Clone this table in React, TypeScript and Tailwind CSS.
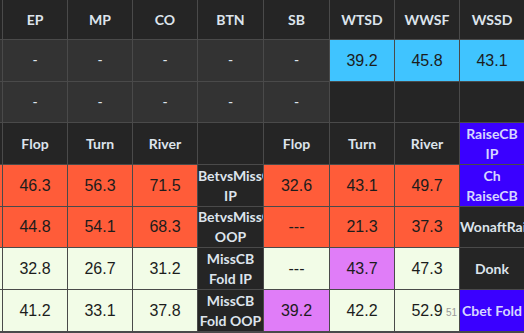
type Kind = "edge" | "head" | "dash" | "empty" | "blue" | "red" | "green" | "purple" | "label" | "violet";

interface CellData {
  kind: Kind;
  text?: string;
  note?: string;
}

const kindClass: Record<Kind, string> = {
  edge: "bg-[#252525]",
  head: "bg-[#252525] text-[#dde4ec] font-['Lato',sans-serif] font-bold text-[14px]",
  dash: "bg-[#333333] text-[#dde4ec] font-['Liberation_Sans',sans-serif] text-[14px]",
  empty: "bg-[#252525]",
  blue: "bg-[#40c4ff] text-[#1c1c1c] font-['Liberation_Sans',sans-serif] text-[16px]",
  red: "bg-[#ff5c39] text-[#1c1c1c] font-['Liberation_Sans',sans-serif] text-[16px]",
  green: "bg-[#f2fce7] text-[#1c1c1c] font-['Liberation_Sans',sans-serif] text-[16px]",
  purple: "bg-[#e07df8] text-[#1c1c1c] font-['Liberation_Sans',sans-serif] text-[16px]",
  label: "bg-[#252525] text-[#dde4ec] font-['Lato',sans-serif] font-bold text-[14px] leading-[20px]",
  violet: "bg-[#3a00ff] text-[#d6d6ff] font-['Lato',sans-serif] font-bold text-[14px] leading-[20px]",
};

const h = (text: string): CellData => ({ kind: "head", text });
const n = (kind: Kind, text: string, note?: string): CellData => ({ kind, text, note });

const rows: CellData[][] = [
  [{ kind: "edge" }, h("EP"), h("MP"), h("CO"), h("BTN"), h("SB"), h("WTSD"), h("WWSF"), h("WSSD")],
  [
    { kind: "dash" },
    n("dash", "-"), n("dash", "-"), n("dash", "-"), n("dash", "-"), n("dash", "-"),
    n("blue", "39.2"), n("blue", "45.8"), n("blue", "43.1"),
  ],
  [
    { kind: "dash" },
    n("dash", "-"), n("dash", "-"), n("dash", "-"), n("dash", "-"), n("dash", "-"),
    { kind: "empty" }, { kind: "empty" }, { kind: "empty" },
  ],
  [
    { kind: "edge" },
    h("Flop"), h("Turn"), h("River"), { kind: "empty" },
    h("Flop"), h("Turn"), h("River"), n("violet", "RaiseCB IP"),
  ],
  [
    { kind: "red" },
    n("red", "46.3"), n("red", "56.3"), n("red", "71.5"), n("label", "BetvsMissCB IP"),
    n("red", "32.6"), n("red", "43.1"), n("red", "49.7"), n("violet", "Ch RaiseCB"),
  ],
  [
    { kind: "red" },
    n("red", "44.8"), n("red", "54.1"), n("red", "68.3"), n("label", "BetvsMissCB OOP"),
    n("red", "---"), n("red", "21.3"), n("red", "37.3"), n("label", "WonaftRaise"),
  ],
  [
    { kind: "green" },
    n("green", "32.8"), n("green", "26.7"), n("green", "31.2"), n("label", "MissCB Fold IP"),
    n("green", "---"), n("purple", "43.7"), n("green", "47.3"), n("label", "Donk"),
  ],
  [
    { kind: "green" },
    n("green", "41.2"), n("green", "33.1"), n("green", "37.8"), n("label", "MissCB Fold OOP"),
    n("purple", "39.2"), n("green", "42.2"), n("green", "52.9", "51"), n("violet", "Cbet Fold"),
  ],
];

function Cell({ cell }: { cell: CellData }) {
  return (
    <div
      className={`relative flex items-center justify-center overflow-hidden text-center ${kindClass[cell.kind]}`}
    >
      <span className="block w-full">{cell.text}</span>
      {cell.note && (
        <span className="absolute right-[2px] bottom-[13px] font-['Liberation_Sans',sans-serif] text-[10px] leading-none text-[#9a9a9a]">
          {cell.note}
        </span>
      )}
    </div>
  );
}

export default function App() {
  return (
    <div className="w-[524px] h-[333px] overflow-hidden bg-[#4a4a4a]">
      <div className="grid grid-cols-[2px_64px_64px_64px_65px_65px_64px_64px_64px] grid-rows-[39px_41px_40px_41px_41px_40px_41px_41px] gap-px">
        {rows.map((row, r) =>
          row.map((cell, c) => <Cell key={`${r}-${c}`} cell={cell} />)
        )}
      </div>
    </div>
  );
}
